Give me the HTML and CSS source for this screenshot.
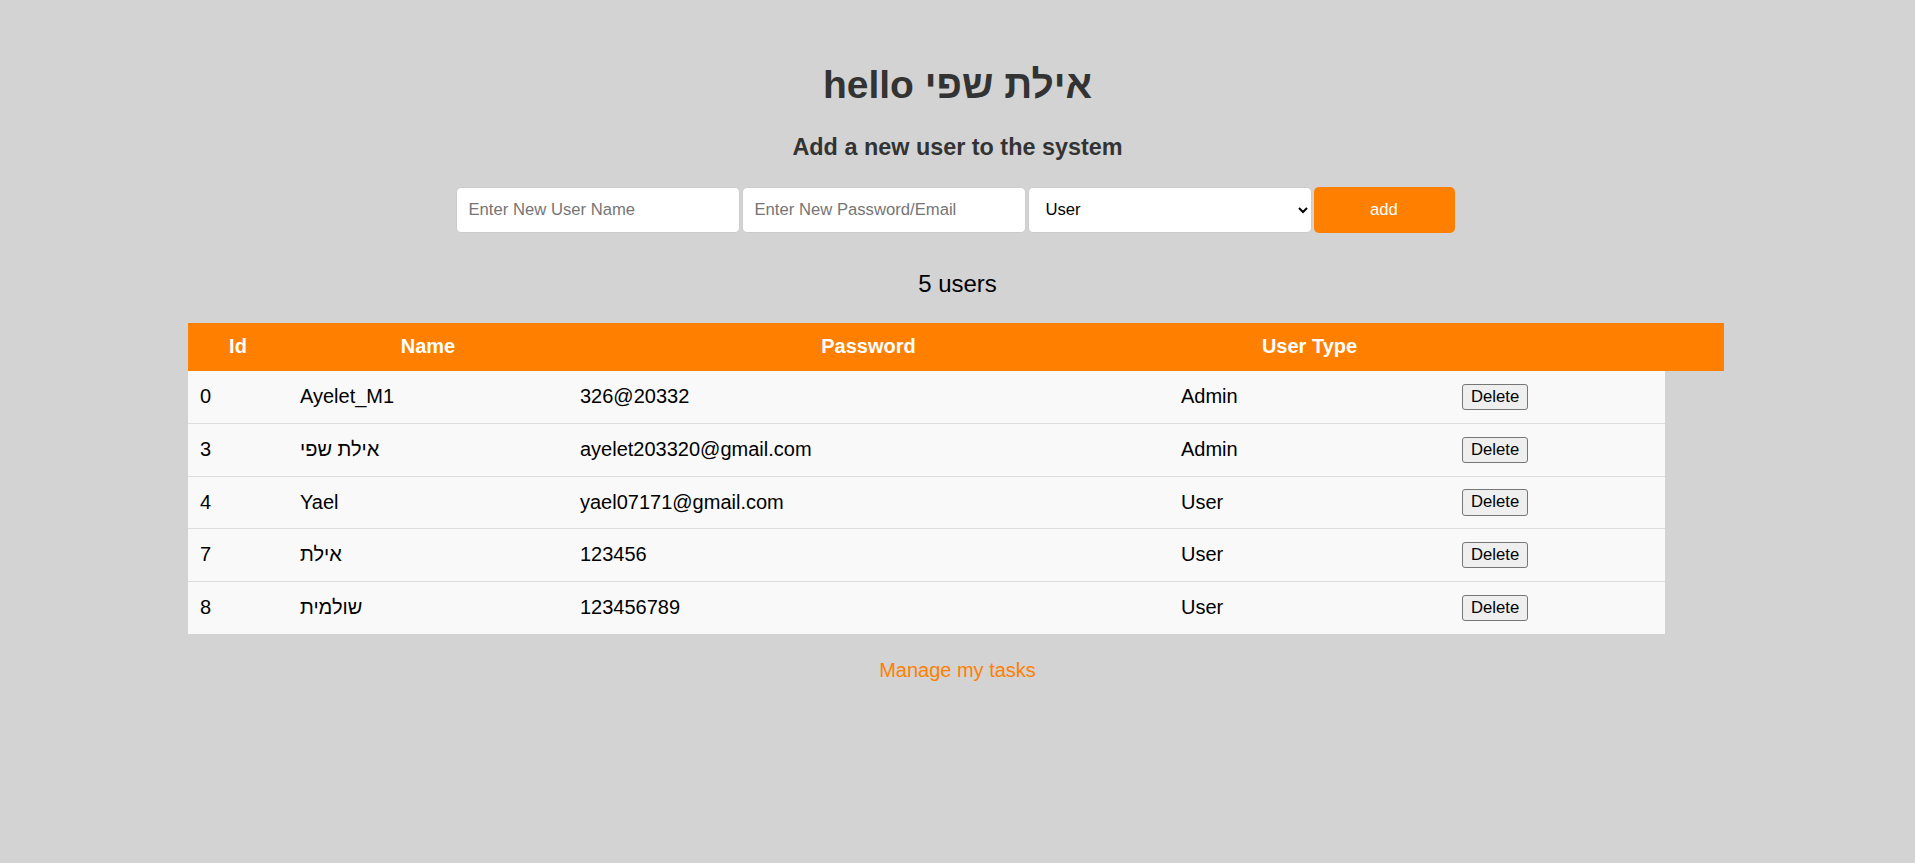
FILE: index.html
```html
<!DOCTYPE html>
<html lang="en">
<head>
<meta charset="utf-8">
<title>Users</title>
<link rel="stylesheet" href="styles.css">
</head>
<body>
<main class="page">
  <h1 class="title">hello אילת שפי</h1>
  <h2 class="subtitle">Add a new user to the system</h2>
  <form class="add-form">
    <input class="field" type="text" placeholder="Enter New User Name">
    <input class="field" type="text" placeholder="Enter New Password/Email">
    <select class="field select">
      <option>User</option>
      <option>Admin</option>
    </select>
    <button class="add-btn" type="button">add</button>
  </form>
  <p class="count">5 users</p>
  <table class="users">
    <colgroup>
      <col class="c-id"><col class="c-name"><col class="c-pass"><col class="c-type"><col class="c-act"><col class="c-extra">
    </colgroup>
    <thead>
      <tr><th>Id</th><th>Name</th><th>Password</th><th>User Type</th><th></th><th></th></tr>
    </thead>
    <tbody>
      <tr><td>0</td><td>Ayelet_M1</td><td>326@20332</td><td>Admin</td><td><button class="del" type="button">Delete</button></td></tr>
      <tr><td>3</td><td>אילת שפי</td><td>ayelet203320@gmail.com</td><td>Admin</td><td><button class="del" type="button">Delete</button></td></tr>
      <tr><td>4</td><td>Yael</td><td>yael07171@gmail.com</td><td>User</td><td><button class="del" type="button">Delete</button></td></tr>
      <tr><td>7</td><td>אילת</td><td>123456</td><td>User</td><td><button class="del" type="button">Delete</button></td></tr>
      <tr><td>8</td><td>שולמית</td><td>123456789</td><td>User</td><td><button class="del" type="button">Delete</button></td></tr>
    </tbody>
  </table>
  <a class="tasks-link" href="#">Manage my tasks</a>
</main>
</body>
</html>
```
FILE: styles.css
```css
html, body {
  margin: 0;
  padding: 0;
  background: #d3d3d3;
}
body {
  font-family: "Liberation Sans", Arial, "DejaVu Sans", sans-serif;
  color: #000;
}
.page {
  display: flex;
  flex-direction: column;
  align-items: center;
  padding-top: 62px;
}
.title {
  margin: 0;
  font-size: 39px;
  font-weight: bold;
  line-height: 45px;
  color: #333;
}
.subtitle {
  margin: 27px 0 0;
  font-size: 23.4px;
  font-weight: bold;
  line-height: normal;
  color: #333;
}
.add-form {
  margin: 26px 5px 0 0;
  display: flex;
  gap: 2px;
  height: 45.6px;
}
.field {
  box-sizing: border-box;
  width: 284px;
  height: 100%;
  margin: 0;
  padding: 0 12px;
  border: 1px solid #ccc;
  border-radius: 5px;
  background: #fff;
  font-family: "Liberation Sans", Arial, sans-serif;
  font-size: 16.67px;
  color: #000;
}
.field::placeholder {
  color: #757575;
}
.select {
  padding-left: 13px;
  padding-right: 8px;
}
.add-btn {
  width: 141px;
  height: 100%;
  margin: 0;
  border: none;
  border-radius: 5px;
  background: #ff7f00;
  color: #fff;
  font-family: "Liberation Sans", Arial, sans-serif;
  font-size: 16.67px;
}
.count {
  margin: 37.5px 0 0;
  font-size: 24px;
  line-height: normal;
}
.users {
  margin-top: 24.8px;
  border-collapse: collapse;
  table-layout: fixed;
  width: 1536px;
  align-self: flex-start;
  margin-left: 188px;
  font-size: 20px;
}
.c-id { width: 100px; }
.c-name { width: 280px; }
.c-pass { width: 601px; }
.c-type { width: 281px; }
.c-act { width: 215px; }
.c-extra { width: 59px; }
.users th {
  background: #ff7f00;
  color: #fff;
  font-weight: bold;
  text-align: center;
  height: 48px;
  padding: 0 12px;
  line-height: normal;
}
.users td {
  background: #f9f9f9;
  text-align: left;
  height: 52.6px;
  padding: 0 12px;
  border-bottom: 1px solid #ddd;
  line-height: normal;
  box-sizing: border-box;
}
.users tbody tr:last-child td {
  border-bottom: none;
}
.del {
  font-family: "Liberation Sans", Arial, sans-serif;
  font-size: 16.67px;
  padding: 1px 8px;
  height: 26.5px;
  border: 1px solid #767676;
  border-radius: 3px;
  background: #efefef;
  color: #000;
}
.tasks-link {
  margin-top: 25px;
  font-size: 20px;
  line-height: normal;
  color: #ff7f00;
  text-decoration: none;
}
```
